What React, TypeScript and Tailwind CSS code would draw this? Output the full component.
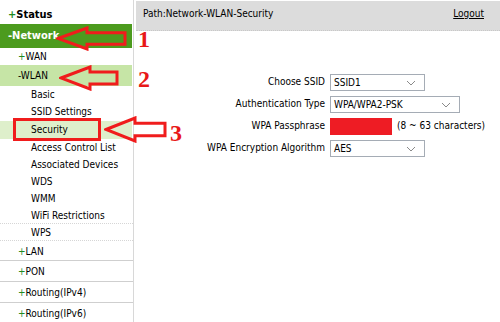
import React from "react"

const font = { fontFamily: '"DejaVu Sans Condensed", "Liberation Sans", sans-serif' }
const serif = { fontFamily: '"Liberation Serif", serif' }

function Chevron() {
  return (
    <svg width="10" height="6" viewBox="0 0 10 6" className="absolute right-[8px] top-[5px]">
      <path d="M1 1 L5 5 L9 1" fill="none" stroke="#8a8a8a" strokeWidth="1" />
    </svg>
  )
}

function Select({ value, width }: { value: string; width: string }) {
  return (
    <div className={`relative h-[17px] border border-[#a5acb5] bg-white pl-[3px] text-[10px] leading-[15px] text-black ${width}`}>
      {value}
      <Chevron />
    </div>
  )
}

const subItems = [
  "Basic",
  "SSID Settings",
  "Security",
  "Access Control List",
  "Associated Devices",
  "WDS",
  "WMM",
  "WiFi Restrictions",
  "WPS",
]

function TopItem({ label }: { label: string }) {
  return (
    <div className="h-[21px] border-t border-[#cfcfcf] pl-[18px] text-[10px] leading-[21px] text-black">
      <span className="text-[#1f8a1f]">+</span>
      {label}
    </div>
  )
}

function Arrow({ w, h }: { w: number; h: number }) {
  // hollow arrow pointing left
  const head = 31
  const shaftTop = h * 0.27
  const shaftBot = h * 0.73
  return (
    <svg width={w} height={h} viewBox={`0 0 ${w} ${h}`}>
      <path
        d={`M2 ${h / 2} L${head} 2 L${head} ${shaftTop} L${w - 2} ${shaftTop} L${w - 2} ${shaftBot} L${head} ${shaftBot} L${head} ${h - 2} Z`}
        fill="none"
        stroke="#f01c1c"
        strokeWidth="3"
      />
    </svg>
  )
}

export default function App() {
  return (
    <div className="relative flex h-[322px] w-[500px] overflow-hidden bg-white" style={font}>
      {/* sidebar */}
      <div className="w-[134px] shrink-0 border-r border-[#d8d8d8]">
        <div className="h-[24px] pl-[8px] text-[11px] font-bold leading-[30px] text-black">
          <span className="text-[#1f8a1f]">+</span>Status
        </div>
        <div className="mr-[1px] h-[24px] bg-[#4c9b1e] pl-[8px] text-[11px] font-bold leading-[24px] text-white">
          -Network
        </div>
        <div className="h-[17px] pl-[18px] text-[10px] leading-[17px] text-black">
          <span className="text-[#1f8a1f]">+</span>WAN
        </div>
        <div className="mr-[1px] h-[21px] bg-[#c6e5a6] pl-[18px] text-[10px] leading-[21px] text-black">-WLAN</div>
        {subItems.map((s, i) => (
          <div
            key={s}
            className={`pl-[31px] text-[10px] text-black ${
              s === "Security" ? "mr-[1px] mt-[1px] h-[18px] bg-[#deefcb] leading-[18px]" : "h-[17px] leading-[17px]"
            } ${i >= 7 ? "border-b border-dotted border-[#d6d6d6]" : ""}`}
          >
            {s}
          </div>
        ))}
        <div className="h-[19px] pl-[18px] text-[10px] leading-[21px] text-black">
          <span className="text-[#1f8a1f]">+</span>LAN
        </div>
        <TopItem label="PON" />
        <TopItem label="Routing(IPv4)" />
        <TopItem label="Routing(IPv6)" />
      </div>

      {/* main */}
      <div className="ml-[2px] flex-1">
        <div className="mt-[1px] flex h-[30px] items-start justify-between border-b border-dotted border-[#c8c8c8] bg-[#dcdcdc] pl-[7px] pr-[16px] pt-[5px] text-[10px] text-black">
          <span>Path:Network-WLAN-Security</span>
          <span className="underline">Logout</span>
        </div>
        <div className="mt-[42px] grid grid-cols-[189px_auto] items-center gap-x-[5px] gap-y-[4px] text-[10px] leading-[18px] text-black">
          <div className="text-right">Choose SSID</div>
          <Select value="SSID1" width="w-[95px]" />
          <div className="text-right">Authentication Type</div>
          <Select value="WPA/WPA2-PSK" width="w-[130px]" />
          <div className="text-right">WPA Passphrase</div>
          <div className="flex items-center gap-[5px]">
            <div className="h-[17px] w-[62px] bg-[#ee1c24]" />
            <span>(8 ~ 63 characters)</span>
          </div>
          <div className="text-right">WPA Encryption Algorithm</div>
          <Select value="AES" width="w-[95px]" />
        </div>
      </div>

      {/* annotations */}
      <div className="absolute left-[56px] top-[26px]">
        <Arrow w={71} h={25} />
      </div>
      <div className="absolute left-[59px] top-[65px]">
        <Arrow w={60} h={26} />
      </div>
      <div className="absolute left-[13px] top-[118px] h-[23px] w-[88px] border-[3px] border-[#f01c1c]" />
      <div className="absolute left-[104px] top-[116px]">
        <Arrow w={63} h={27} />
      </div>
      <div className="absolute left-[138px] top-[27px] text-[24px] font-bold leading-none text-[#e81818]" style={serif}>
        1
      </div>
      <div className="absolute left-[138px] top-[67px] text-[24px] font-bold leading-none text-[#e81818]" style={serif}>
        2
      </div>
      <div className="absolute left-[170px] top-[121px] text-[24px] font-bold leading-none text-[#e81818]" style={serif}>
        3
      </div>
    </div>
  )
}
